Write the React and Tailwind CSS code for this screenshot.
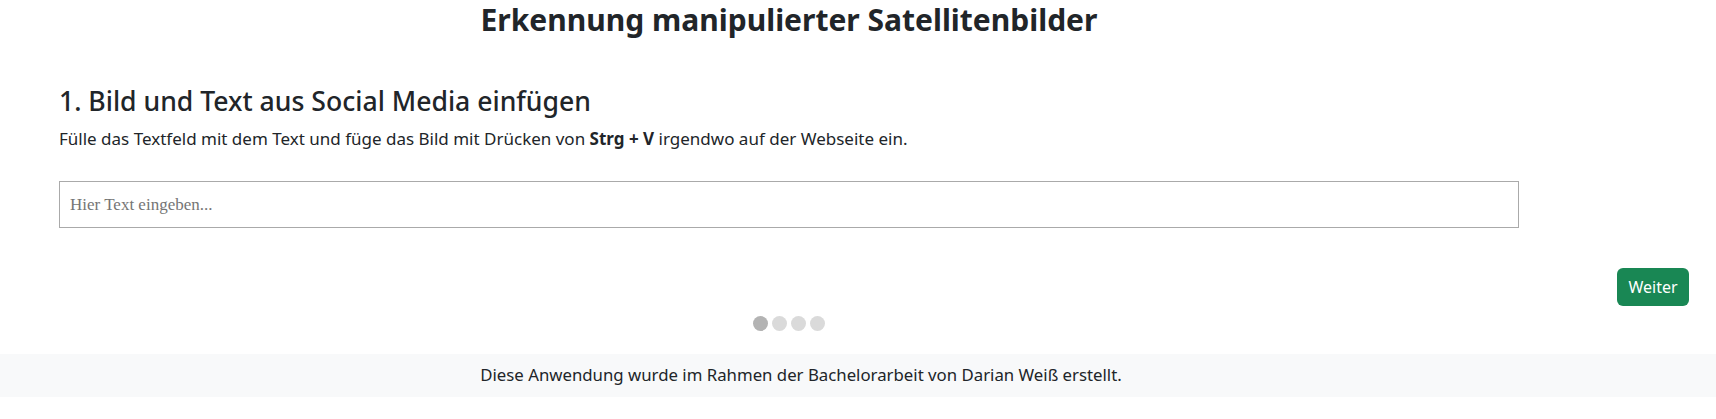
import React, { useState } from 'react';

const STEPS = 4;

export default function App() {
  const [text, setText] = useState('');
  const [step] = useState(0);

  return (
    <div className="min-h-screen bg-white text-[#212529] font-['Noto_Sans',sans-serif]">
      <div className="pl-[59px] pr-[197px]">
        <h2 className="text-center text-[30px] font-bold leading-[40px]">
          Erkennung manipulierter Satellitenbilder
        </h2>

        <h3 className="mt-[44px] text-[26.6px] font-medium leading-[34px]">
          1. Bild und Text aus Social Media einfügen
        </h3>
        <p className="mt-[9px] text-[17px] leading-[24px]">
          Fülle das Textfeld mit dem Text und füge das Bild mit Drücken von{' '}
          <strong className="font-bold">Strg + V</strong> irgendwo auf der Webseite ein.
        </p>

        <input
          type="text"
          value={text}
          onChange={e => setText(e.target.value)}
          placeholder="Hier Text eingeben..."
          className="mt-[30px] block w-full h-[47px] border border-[#aaaaaa] px-[10px] font-['Liberation_Serif',serif] text-[17px] text-[#212529] placeholder:text-[#757575] outline-none"
        />
      </div>

      <div className="mt-[40px] flex justify-end pr-[27px]">
        <button className="h-[38px] w-[72px] rounded-[6px] bg-[#198754] text-[16px] text-white hover:bg-[#157347]">
          Weiter
        </button>
      </div>

      <div className="mt-[10px] pl-[59px] pr-[197px] flex justify-center gap-[4px]">
        {Array.from({ length: STEPS }).map((_, i) => (
          <span
            key={i}
            className={i === step ? 'h-[15px] w-[15px] rounded-full bg-[#b3b3b3]' : 'h-[15px] w-[15px] rounded-full bg-[#dadada]'}
          />
        ))}
      </div>

      <footer className="mt-[23px] h-[43px] bg-[#f8f9fa] pt-[9px] pr-[114px] text-center text-[16.8px] leading-[24px]">
        Diese Anwendung wurde im Rahmen der Bachelorarbeit von Darian Weiß erstellt.
      </footer>
    </div>
  );
}
